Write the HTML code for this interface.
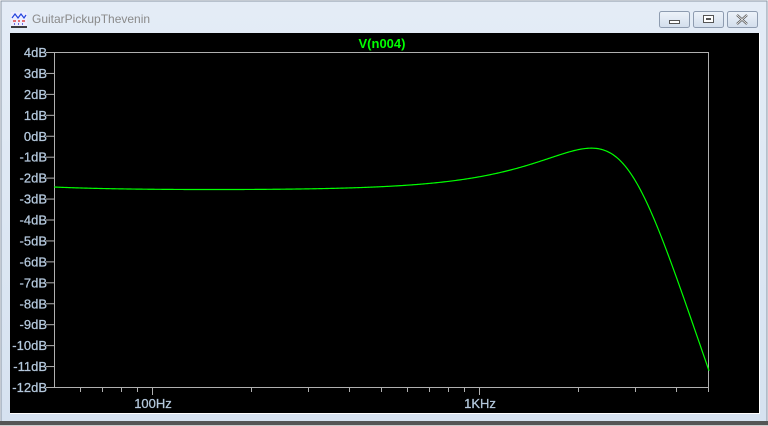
<!DOCTYPE html>
<html><head><style>
body{margin:0;width:768px;height:426px;overflow:hidden;background:#fff;font-family:"Liberation Sans",sans-serif}
</style></head><body>
<svg width="768" height="426" xmlns="http://www.w3.org/2000/svg" style="position:absolute;left:0;top:0">
<defs><linearGradient id="tb" x1="0" y1="0" x2="0" y2="1"><stop offset="0" stop-color="#e4ecf6"/><stop offset="1" stop-color="#d6e2f0"/></linearGradient>
<linearGradient id="bt" x1="0" y1="0" x2="0" y2="1"><stop offset="0" stop-color="#eef3fa"/><stop offset="1" stop-color="#d2deec"/></linearGradient></defs>
<rect x="0" y="0" width="768" height="426" fill="#fff"/>
<rect x="1" y="1" width="766" height="424" fill="url(#tb)" stroke="#8a96a4"/>
<rect x="0" y="421" width="768" height="5" fill="#555"/>
<rect x="0" y="425" width="768" height="1" fill="#ccc"/>
<g transform="translate(11,12)">
<rect x="0" y="0" width="16" height="15" fill="#eef"/>
<path d="M1 6 L4 2 L7 6 L10 2 L13 6 L15 3" stroke="#2244dd" fill="none" stroke-width="1.2"/>
<path d="M2 9 h3 M7 9 h2 M11 9 h3" stroke="#d22" stroke-width="1.2"/>
<path d="M3 12 h1 M7 12 h1 M11 12 h1" stroke="#22c" stroke-width="1.2"/>
<path d="M0 15 h16" stroke="#000" stroke-width="1.5"/>
</g>
<text x="32" y="23" font-size="12" fill="#8a8a8a">GuitarPickupThevenin</text>
<g stroke="#8e9cb0" fill="url(#bt)">
<rect x="659.5" y="11.5" width="30" height="16" rx="2"/>
<rect x="693.5" y="11.5" width="30" height="16" rx="2"/>
<rect x="727.5" y="11.5" width="30" height="16" rx="2"/>
</g>
<rect x="669.5" y="20.5" width="10" height="3" fill="#fff" stroke="#555"/>
<rect x="703.5" y="15.5" width="10" height="7" fill="#fff" stroke="#555"/>
<rect x="706" y="18" width="5" height="2" fill="#555"/>
<path d="M737 15 l10 9 M747 15 l-10 9" stroke="#555" stroke-width="2.2"/>
<path d="M737 15 l10 9 M747 15 l-10 9" stroke="#fff" stroke-width="0.8"/>
<rect x="10" y="33" width="749" height="380" fill="#000"/>
<rect x="10" y="413" width="749" height="1" fill="#fff"/>
<rect x="759" y="33" width="1" height="381" fill="#fff"/>
<rect x="54.5" y="52.5" width="654" height="335" fill="none" stroke="#b0b0b0"/>
<g id="yl" font-size="13" fill="#b4c8dc" text-anchor="end" stroke="#b4c8dc" stroke-width="0.25"></g>
<g id="tk" stroke="#b0b0b0"></g>
<text x="153" y="408" font-size="13" fill="#b4c8dc" text-anchor="middle" stroke="#b4c8dc" stroke-width="0.25">100Hz</text>
<text x="480" y="408" font-size="13" fill="#b4c8dc" text-anchor="middle" stroke="#b4c8dc" stroke-width="0.25">1KHz</text>
<text x="382" y="48" font-size="13" font-weight="bold" fill="#00ff00" text-anchor="middle">V(n004)</text>
<path id="cv" fill="none" stroke="#00ff00" stroke-width="1.2"/>
</svg>
<script>
var ns="http://www.w3.org/2000/svg";
var yl=document.getElementById("yl"),tk=document.getElementById("tk");
for(var i=0;i<=16;i++){var db=4-i,y=52+i*335/16;
var t=document.createElementNS(ns,"text");t.setAttribute("x",47);t.setAttribute("y",y+5);t.textContent=db+"dB";yl.appendChild(t);
var l=document.createElementNS(ns,"line");l.setAttribute("x1",46);l.setAttribute("x2",54);l.setAttribute("y1",y+0.5);l.setAttribute("y2",y+0.5);tk.appendChild(l);}
function X(f){return 54+327*Math.log10(f/50);}
var fs=[60,70,80,90,100,200,300,400,500,600,700,800,900,1000,2000,3000,4000,5000];
fs.forEach(function(f){var x=Math.round(X(f))+0.5;var big=(f==100||f==1000);
var l=document.createElementNS(ns,"line");l.setAttribute("x1",x);l.setAttribute("x2",x);l.setAttribute("y1",387);l.setAttribute("y2",big?395:392);tk.appendChild(l);});
var d="";
for(var x=54;x<=709;x+=1){var f=50*Math.pow(10,(x-54)/327);var r=f/2820,Q=1.13;
var m=(1-r*r)*(1-r*r)+(r/Q)*(r/Q);var db=-2.6-10*Math.log10(m)+0.15*Math.pow(50/f,2);
var y=52+(4-db)*335/16;d+=(x==54?"M":"L")+x+" "+y.toFixed(2);}
document.getElementById("cv").setAttribute("d",d);
</script>
</body></html>
